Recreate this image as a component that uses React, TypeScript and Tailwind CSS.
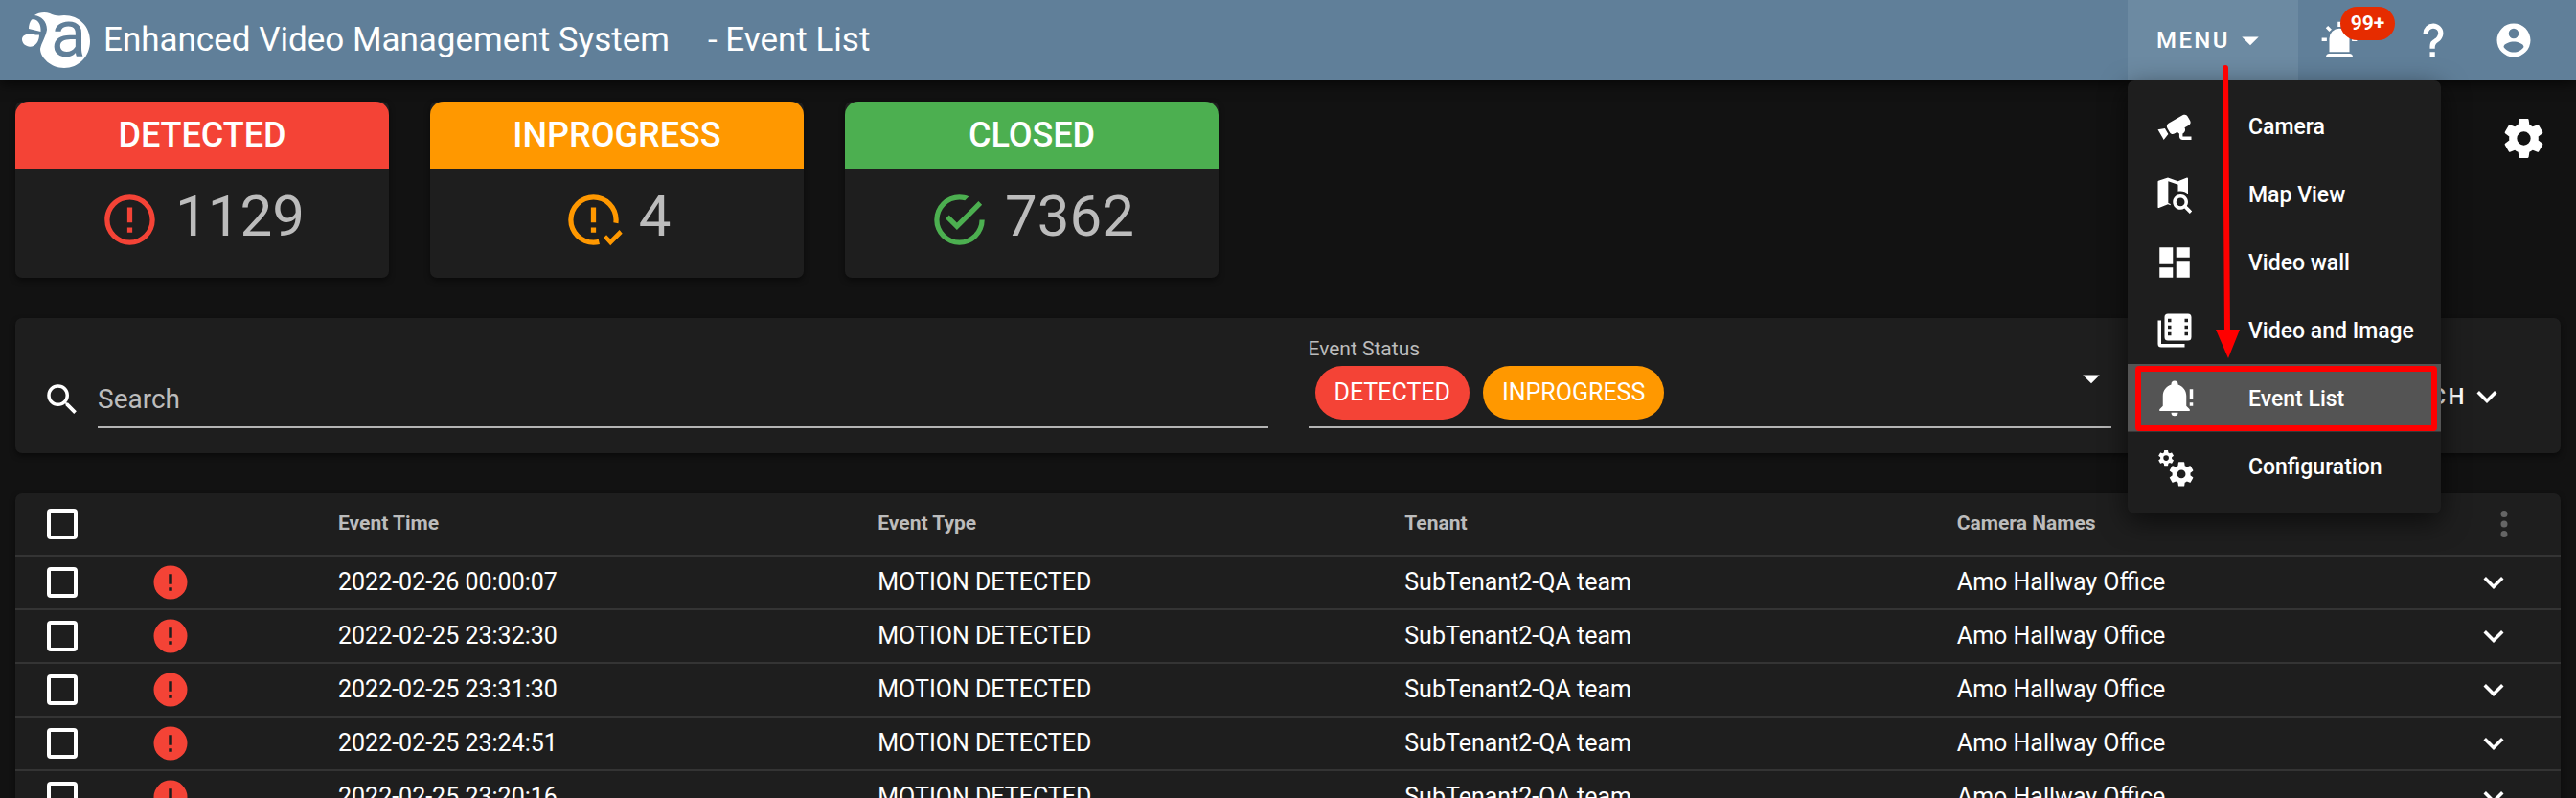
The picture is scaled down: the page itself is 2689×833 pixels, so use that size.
import type { ReactNode } from "react";
import clsx from "clsx";

const paths = {
  cog: "M12,15.5A3.5,3.5 0 0,1 8.5,12A3.5,3.5 0 0,1 12,8.5A3.5,3.5 0 0,1 15.5,12A3.5,3.5 0 0,1 12,15.5M19.43,12.97C19.47,12.65 19.5,12.33 19.5,12C19.5,11.67 19.47,11.34 19.43,11L21.54,9.37C21.73,9.22 21.78,8.95 21.66,8.73L19.66,5.27C19.54,5.05 19.27,4.96 19.05,5.05L16.56,6.05C16.04,5.66 15.5,5.32 14.87,5.07L14.5,2.42C14.46,2.18 14.25,2 14,2H10C9.75,2 9.54,2.18 9.5,2.42L9.13,5.07C8.5,5.32 7.96,5.66 7.44,6.05L4.95,5.05C4.73,4.96 4.46,5.05 4.34,5.27L2.34,8.73C2.21,8.95 2.27,9.22 2.46,9.37L4.57,11C4.53,11.34 4.5,11.67 4.5,12C4.5,12.33 4.53,12.65 4.57,12.97L2.46,14.63C2.27,14.78 2.21,15.05 2.34,15.27L4.34,18.73C4.46,18.95 4.73,19.03 4.95,18.95L7.44,17.94C7.96,18.34 8.5,18.68 9.13,18.93L9.5,21.58C9.54,21.82 9.75,22 10,22H14C14.25,22 14.46,21.82 14.5,21.58L14.87,18.93C15.5,18.67 16.04,18.34 16.56,17.94L19.05,18.95C19.27,19.03 19.54,18.95 19.66,18.73L21.66,15.27C21.78,15.05 21.73,14.78 21.54,14.63L19.43,12.97Z",
  search:
    "M9.5,3A6.5,6.5 0 0,1 16,9.5C16,11.11 15.41,12.59 14.44,13.73L14.71,14H15.5L20.5,19L19,20.5L14,15.5V14.71L13.73,14.44C12.59,15.41 11.11,16 9.5,16A6.5,6.5 0 0,1 3,9.5A6.5,6.5 0 0,1 9.5,3M9.5,5C7,5 5,7 5,9.5C5,12 7,14 9.5,14C12,14 14,12 14,9.5C14,7 12,5 9.5,5Z",
  account:
    "M12,19.2C9.5,19.2 7.29,17.92 6,16C6.03,14 10,12.9 12,12.9C14,12.9 17.97,14 18,16C16.71,17.92 14.5,19.2 12,19.2M12,5A3,3 0 0,1 15,8A3,3 0 0,1 12,11A3,3 0 0,1 9,8A3,3 0 0,1 12,5M12,2A10,10 0 0,0 2,12A10,10 0 0,0 12,22A10,10 0 0,0 22,12C22,6.47 17.5,2 12,2Z",
  alert:
    "M13,13H11V7H13V13M13,17H11V15H13V17M12,2A10,10 0 0,0 2,12A10,10 0 0,0 12,22A10,10 0 0,0 22,12A10,10 0 0,0 12,2Z",
  alertOutline:
    "M11,15H13V17H11V15M11,7H13V13H11V7M12,2C6.47,2 2,6.5 2,12A10,10 0 0,0 12,22A10,10 0 0,0 22,12A10,10 0 0,0 12,2M12,20A8,8 0 0,1 4,12A8,8 0 0,1 12,4A8,8 0 0,1 20,12A8,8 0 0,1 12,20Z",
  alertCheck:
    "M11,15H13V17H11V15M11,7H13V13H11V7M12,2A10,10 0 0,0 2,12A10,10 0 0,0 12,22C12.85,22 13.68,21.89 14.47,21.69L14,19.75C13.36,19.91 12.69,20 12,20A8,8 0 0,1 4,12A8,8 0 0,1 12,4A8,8 0 0,1 20,12L19.93,13.06L21.9,13.4L22,12A10,10 0 0,0 12,2M18.75,22.16L16,19.16L17.16,18L18.75,19.59L22.34,16L23.5,17.41L18.75,22.16Z",
  checkOutline:
    "M20,12A8,8 0 0,1 12,20A8,8 0 0,1 4,12A8,8 0 0,1 12,4C12.76,4 13.5,4.11 14.2,4.31L15.77,2.74C14.61,2.26 13.34,2 12,2A10,10 0 0,0 2,12A10,10 0 0,0 12,22A10,10 0 0,0 22,12M7.91,10.08L6.5,11.5L11,16L21,6L19.59,4.58L11,13.17L7.91,10.08Z",
  chevron: "M7.41,8.58L12,13.17L16.59,8.58L18,10L12,16L6,10L7.41,8.58Z",
  menuDown: "M7,10L12,15L17,10H7Z",
  dots: "M12,16A2,2 0 0,1 14,18A2,2 0 0,1 12,20A2,2 0 0,1 10,18A2,2 0 0,1 12,16M12,10A2,2 0 0,1 14,12A2,2 0 0,1 12,14A2,2 0 0,1 10,12A2,2 0 0,1 12,10M12,4A2,2 0 0,1 14,6A2,2 0 0,1 12,8A2,2 0 0,1 10,6A2,2 0 0,1 12,4Z",
  alarm:
    "M6,6.9L3.87,4.78L5.28,3.37L7.4,5.5L6,6.9M13,1V4H11V1H13M20.13,4.78L18,6.9L16.6,5.5L18.72,3.37L20.13,4.78M4.5,10.5V12.5H1.5V10.5H4.5M19.5,10.5H22.5V12.5H19.5V10.5M6,20H18A2,2 0 0,1 20,22H4A2,2 0 0,1 6,20M12,5A6,6 0 0,1 18,11V19H6V11A6,6 0 0,1 12,5Z",
  help: "M10,19H13V22H10V19M12,2C17.35,2.22 19.68,7.62 16.5,11.67C15.67,12.67 14.33,13.33 13.67,14.17C13,15 13,16 13,17H10C10,15.33 10,13.92 10.67,12.92C11.33,11.92 12.67,11.33 13.5,10.67C15.92,8.43 15.32,5.26 12,5A3,3 0 0,0 9,8H6A6,6 0 0,1 12,2Z",
  cctv: "M18.15,4.94C17.77,4.91 17.37,5 17,5.2L8.35,10.2C7.39,10.76 7.07,12 7.62,12.94L9.12,15.53C9.67,16.5 10.89,16.82 11.85,16.27L13.65,15.23C13.92,15.69 14.32,16.06 14.81,16.27V18.04C14.81,19.13 15.7,20 16.81,20H22V18.04H16.81V16.27C17.72,15.87 18.31,14.97 18.31,14C18.31,13.54 18.19,13.11 17.97,12.73L20.5,11.27C21.47,10.71 21.8,9.5 21.24,8.53L19.74,5.94C19.4,5.34 18.79,5 18.15,4.94M6.22,13.17L2,13.87L2.75,15.17L4.75,18.63L5.5,19.93L8.22,16.63L6.22,13.17Z",
  map: "M15.5,12C18,12 20,14 20,16.5C20,17.38 19.75,18.21 19.31,18.9L22.39,22L21,23.39L17.88,20.32C17.19,20.75 16.37,21 15.5,21C13,21 11,19 11,16.5C11,14 13,12 15.5,12M15.5,14A2.5,2.5 0 0,0 13,16.5A2.5,2.5 0 0,0 15.5,19A2.5,2.5 0 0,0 18,16.5A2.5,2.5 0 0,0 15.5,14M19.5,2A0.5,0.5 0 0,1 20,2.5V11.81C18.83,10.69 17.25,10 15.5,10C15,10 14.5,10.06 14,10.17V6.1L8.2,4.1V17.2L9.5,17.7L9.6,18.4L8,17.9L2.66,19.97L2.5,20A0.5,0.5 0 0,1 2,19.5V4.38C2,4.15 2.15,3.97 2.36,3.9L8,2L14,4.1L19.34,2.03L19.5,2Z",
  wall: "M13,3V9H21V3M13,21H21V11H13M3,21H11V15H3M3,13H11V3H3V13Z",
  film: "M4,6H2V20A2,2 0 0,0 4,22H18V20H4V6M8,2H20A2,2 0 0,1 22,4V16A2,2 0 0,1 20,18H8A2,2 0 0,1 6,16V4A2,2 0 0,1 8,2M8,5V7H10V5H8M8,9V11H10V9H8M8,13V15H10V13H8M18,5V7H20V5H18M18,9V11H20V9H18M18,13V15H20V13H18Z",
  bell: "M23,7V13H21V7H23M21,15H23V17H21V15M21,19V20H3V19L5,17V11C5,7.9 7.03,5.17 10,4.29C10,4.19 10,4.1 10,4A2,2 0 0,1 12,2A2,2 0 0,1 14,4C14,4.1 14,4.19 14,4.29C16.97,5.17 19,7.9 19,11V17L21,19M14,21A2,2 0 0,1 12,23A2,2 0 0,1 10,21",
};

type IconName = keyof typeof paths;

function Icon({ name, className = "size-[42px]" }: { name: IconName; className?: string }) {
  return (
    <svg viewBox="0 0 24 24" fill="currentColor" aria-hidden="true" className={clsx("shrink-0", className)}>
      <path fillRule="evenodd" d={paths[name]} />
    </svg>
  );
}

function CogsIcon() {
  return (
    <svg viewBox="0 0 24 24" fill="currentColor" aria-hidden="true" className="size-[42px] shrink-0">
      <path transform="translate(1.4 1.4) scale(0.46)" d={paths.cog} />
      <path transform="translate(7.4 7.9) scale(0.72)" d={paths.cog} />
    </svg>
  );
}

function Logo() {
  return (
    <svg viewBox="20 10 76 64" aria-hidden="true" className="h-16 w-[76px] shrink-0 overflow-visible">
      <g fill="#fff">
        <path d="M36 16C40 13 47 12 52 14C56 16 60 17 67 16C83 16 94 28 94 43C94 59 82 71 67 71C53 71 42 60 42 51C43 45 48 38 49 31C49 22 43 17 36 16Z" />
        <path d="M33 20.5C39 19 43 25 42.500 33L30 30C30 26 31 23 33 20.500Z" />
        <path d="M29 35.500C33 35 37 37 41 36.500C41 43 37 49 31 48.700C25 48 23 44 23 41C23 38 26 36 29 35.500Z" />
      </g>
      <text x="53" y="59" fontSize="68" fill="#607f99" className="font-[Roboto]">
        a
      </text>
    </svg>
  );
}

const stats: { label: string; count: number; icon: IconName; bar: string; tint: string }[] = [
  { label: "DETECTED", count: 1129, icon: "alertOutline", bar: "bg-[#f44336]", tint: "text-[#f44336]" },
  { label: "INPROGRESS", count: 4, icon: "alertCheck", bar: "bg-[#ff9800]", tint: "text-[#ff9800]" },
  { label: "CLOSED", count: 7362, icon: "checkOutline", bar: "bg-[#4caf50]", tint: "text-[#4caf50]" },
];

const menuItems: { label: string; icon: ReactNode; active?: boolean }[] = [
  { label: "Camera", icon: <Icon name="cctv" /> },
  { label: "Map View", icon: <Icon name="map" /> },
  { label: "Video wall", icon: <Icon name="wall" /> },
  { label: "Video and Image", icon: <Icon name="film" /> },
  { label: "Event List", icon: <Icon name="bell" />, active: true },
  { label: "Configuration", icon: <CogsIcon /> },
];

const times = [
  "2022-02-26 00:00:07",
  "2022-02-25 23:32:30",
  "2022-02-25 23:31:30",
  "2022-02-25 23:24:51",
  "2022-02-25 23:20:16",
];

const card = "rounded-[7px] bg-[#1e1e1e] shadow-[0_3px_6px_rgba(0,0,0,0.45)]";
const checkbox = "block size-8 appearance-none rounded-sm border-4 border-white";

function MainMenu() {
  return (
    <div className="relative mr-[22px] h-full">
      <button
        type="button"
        aria-expanded="true"
        className="flex h-full w-[178px] items-center bg-[#6c8aa2] pl-[30px] text-[24px] font-medium tracking-widest"
      >
        MENU
        <Icon name="menuDown" />
      </button>

      <nav className="absolute top-full left-0 z-20 w-[327px] rounded-[7px] bg-[#1e1e1e] pt-3 pb-3.5 shadow-[0_8px_28px_rgba(0,0,0,0.6)]">
        {menuItems.map((item) => (
          <a
            key={item.label}
            href="#"
            className={clsx(
              "relative flex h-[71px] items-center gap-14 pl-7 text-[23px] font-medium whitespace-nowrap",
              item.active && "border-b border-[#3a3a3a] bg-[#545454]"
            )}
          >
            {item.icon}
            <span className="pt-1">{item.label}</span>
            {item.active && (
              <span className="absolute top-0.5 right-1 bottom-0 left-2 rounded-sm border-6 border-[#ff0000]" />
            )}
          </a>
        ))}
      </nav>

      {/* pointer from the menu button down to the event list entry */}
      <svg viewBox="0 0 26 306" aria-hidden="true" className="absolute top-[68px] left-[92px] z-30 h-[306px] w-[26px]">
        <path d="M10 3L12 280" stroke="#f00" strokeWidth="6" strokeLinecap="round" />
        <path d="M0 276H25L13 306Z" fill="#f00" />
      </svg>
    </div>
  );
}

function Header() {
  return (
    <header className="flex h-21 items-center bg-[#607f99] pr-11 pl-5 shadow-[0_4px_12px_rgba(0,0,0,0.6)]">
      <Logo />
      <h1 className="ml-3 text-[35px] whitespace-nowrap">Enhanced Video Management System</h1>
      <span className="ml-10 text-[35px] whitespace-nowrap">- Event List</span>
      <div className="ml-auto flex h-full items-center">
        <MainMenu />
        <button type="button" aria-label="Alarms" className="relative mr-14">
          <Icon name="alarm" />
          <span className="absolute -top-3.5 left-[22px] flex h-[35px] w-[57px] items-center justify-center rounded-full bg-[#e62c00] text-[21px] font-bold">
            99+
          </span>
        </button>
        <button type="button" aria-label="Help" className="mr-[42px]">
          <Icon name="help" />
        </button>
        <button type="button" aria-label="Account">
          <Icon name="account" />
        </button>
      </div>
    </header>
  );
}

function StatCards() {
  return (
    <section className="flex items-start gap-[43px]">
      {stats.map((stat) => (
        <div key={stat.label} className={clsx(card, "h-46 w-[390px]")}>
          <h2
            className={clsx(
              "flex h-[70px] items-center justify-center rounded-t-[14px] text-[36px] font-medium",
              stat.bar
            )}
          >
            {stat.label}
          </h2>
          <div className="flex items-start justify-center gap-4 pt-5">
            <Icon name={stat.icon} className={clsx("mt-0.5 size-[63px]", stat.tint)} />
            <span className="text-[60px] leading-[60px] text-[#bcbcbc]">{stat.count}</span>
          </div>
        </div>
      ))}
      <button type="button" aria-label="Settings" className="mt-3.5 mr-3.5 ml-auto">
        <Icon name="cog" className="size-[49px]" />
      </button>
    </section>
  );
}

function Filters() {
  return (
    <section className={clsx(card, "grid grid-cols-[1329fr_881fr_448fr] items-end pt-[18px] pb-[26px]")}>
      <div className="flex items-center gap-4 pr-[21px] pl-7">
        <Icon name="search" />
        <input
          type="text"
          aria-label="Search"
          placeholder="Search"
          className="h-[60px] min-w-0 flex-1 border-b-2 border-[#b4b4b4] bg-transparent text-[28px] placeholder:text-[#bcbcbc]"
        />
      </div>

      <div className="px-[21px]">
        <label htmlFor="status" className="block text-[21px] leading-7 text-[#bcbcbc]">
          Event Status
        </label>
        <div className="relative flex gap-3.5 border-b-2 border-[#b4b4b4] px-[7px] pt-1 pb-[7px] text-[25px]">
          <span className="flex h-14 items-center rounded-full bg-[#f44336] px-5">DETECTED</span>
          <span className="flex h-14 items-center rounded-full bg-[#ff9800] px-5">INPROGRESS</span>
          <select id="status" className="min-w-0 flex-1 appearance-none bg-transparent">
            <option value="" />
            <option value="closed">CLOSED</option>
          </select>
          <Icon name="menuDown" className="pointer-events-none absolute -top-1 right-0 size-[42px]" />
        </div>
      </div>

      <button
        type="button"
        className="flex h-[66px] items-center justify-end pr-14 text-[24px] font-medium tracking-widest"
      >
        SEARCH
        <Icon name="chevron" />
      </button>
    </section>
  );
}

function EventTable() {
  return (
    <section className={card}>
      <table className="w-full table-fixed text-left">
        <colgroup>
          <col className="w-[113px]" />
          <col className="w-[196px]" />
          <col className="w-[21.2%]" />
          <col className="w-[20.7%]" />
          <col className="w-[21.7%]" />
          <col />
          <col className="w-[140px]" />
        </colgroup>
        <thead>
          <tr className="h-[65px] border-b-2 border-[#343434] text-[21px] text-[#bcbcbc]">
            <th className="pl-[33px]">
              <input type="checkbox" aria-label="Select all events" className={checkbox} />
            </th>
            <th />
            <th className="pl-7">Event Time</th>
            <th className="pl-7">Event Type</th>
            <th className="pl-7">Tenant</th>
            <th className="pl-7">Camera Names</th>
            <th className="pr-[38px]">
              <button type="button" aria-label="Columns" className="ml-auto block text-[#656565]">
                <Icon name="dots" />
              </button>
            </th>
          </tr>
        </thead>
        <tbody>
          {times.map((time) => (
            <tr key={time} className="h-14 border-b-2 border-[#343434] text-[25px]">
              <td className="pl-[33px]">
                <input type="checkbox" aria-label={time} className={checkbox} />
              </td>
              <td className="pl-7 text-[#f44336]">
                <Icon name="alert" />
              </td>
              <td className="pl-7">{time}</td>
              <td className="pl-7">MOTION DETECTED</td>
              <td className="pl-7">SubTenant2-QA team</td>
              <td className="pl-7">Amo Hallway Office</td>
              <td className="pr-[49px]">
                <button type="button" aria-label="Expand" className="ml-auto block">
                  <Icon name="chevron" />
                </button>
              </td>
            </tr>
          ))}
        </tbody>
      </table>
    </section>
  );
}

export default function App() {
  return (
    <div className="h-screen overflow-hidden bg-[#121212] font-[Roboto,sans-serif] text-white">
      <Header />
      <main className="flex flex-col gap-[42px] px-4 pt-[22px]">
        <StatCards />
        <Filters />
        <EventTable />
      </main>
    </div>
  );
}
